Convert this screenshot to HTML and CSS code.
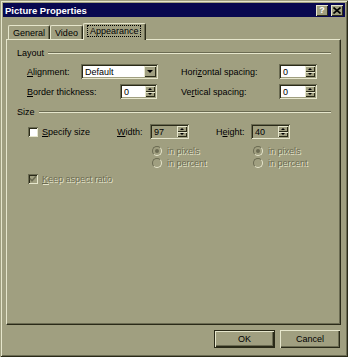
FILE: index.html
```html
<!DOCTYPE html>
<html lang="en">
<head>
    <meta charset="UTF-8">
    <title>Picture Properties</title>
    <link rel="stylesheet" href="styles.css">
</head>
<body>
    <div class="window">
        <div class="titlebar">
            <span class="title">Picture Properties</span>
            <div class="caption-btns">
                <button class="cap cap-help">?</button>
                <button class="cap cap-close">
                    <svg width="8" height="7" viewBox="0 0 8 7"><path d="M0.5 0.5 L7.5 6.5 M7.5 0.5 L0.5 6.5" stroke="#000" stroke-width="1.6"/></svg>
                </button>
            </div>
        </div>

        <div class="content">
            <div class="tabs">
                <div class="tab">General</div>
                <div class="tab">Video</div>
                <div class="tab active"><span class="focus">Appearance</span></div>
            </div>

            <div class="panel">
                <div class="group"><span>Layout</span><i class="etch"></i></div>

                <div class="row row-first">
                    <label class="lbl w-align"><u>A</u>lignment:</label>
                    <div class="field combo">
                        <span class="value">Default</span>
                        <span class="drop"></span>
                    </div>
                    <label class="lbl w-side"><span>Hori<u>z</u>ontal spacing:</span></label>
                    <div class="field spin">
                        <span class="value">0</span>
                        <span class="spin-btns"><i class="up"></i><i class="down"></i></span>
                    </div>
                </div>

                <div class="row">
                    <label class="lbl w-border"><u>B</u>order thickness:</label>
                    <div class="field spin spin-short">
                        <span class="value">0</span>
                        <span class="spin-btns"><i class="up"></i><i class="down"></i></span>
                    </div>
                    <label class="lbl w-side side-2">Ve<u>r</u>tical spacing:</label>
                    <div class="field spin">
                        <span class="value">0</span>
                        <span class="spin-btns"><i class="up"></i><i class="down"></i></span>
                    </div>
                </div>

                <div class="group group-size"><span>Size</span><i class="etch"></i></div>

                <div class="size-grid">
                    <div class="check-item">
                        <span class="checkbox"></span>
                        <span><u>S</u>pecify size</span>
                    </div>
                    <label class="lbl"><u>W</u>idth:</label>
                    <div class="field spin field-off spin-w">
                        <span class="value">97</span>
                        <span class="spin-btns"><i class="up"></i><i class="down"></i></span>
                    </div>
                    <label class="lbl">H<u>e</u>ight:</label>
                    <div class="field spin field-off spin-w">
                        <span class="value">40</span>
                        <span class="spin-btns"><i class="up"></i><i class="down"></i></span>
                    </div>

                    <div class="radio-item off col-w r2"><span class="radio on"></span>in pixels</div>
                    <div class="radio-item off col-h r2"><span class="radio on"></span>in pixels</div>
                    <div class="radio-item off col-w r3"><span class="radio"></span>in percent</div>
                    <div class="radio-item off col-h r3"><span class="radio"></span>in percent</div>

                    <div class="check-item off r4">
                        <span class="checkbox checked">
                            <svg width="8" height="8" viewBox="0 0 8 8"><path d="M1 3.5 L3 5.8 L7 1.2" fill="none" stroke="#6b6b52" stroke-width="1.6"/></svg>
                        </span>
                        <span><u>K</u>eep aspect ratio</span>
                    </div>
                </div>
            </div>

            <div class="footer">
                <button class="btn btn-default">OK</button>
                <button class="btn">Cancel</button>
            </div>
        </div>
    </div>
</body>
</html>
```

FILE: styles.css
```css
:root {
    --face: #a09f80;
    --light: #e6e6cc;
    --shadow: #6b6b52;
    --dark: #2a2a18;
    --title: #08084f;
}

body {
    margin: 0;
    font-family: "Liberation Sans", Arial, sans-serif;
    font-size: 9px;
    color: #000;
    background: var(--face);
}

button {
    font-family: inherit;
    font-size: inherit;
    color: inherit;
    padding: 0;
    border: none;
}

u {
    text-decoration: underline;
    text-underline-offset: 1px;
}

.window {
    width: 348px;
    height: 357px;
    box-sizing: border-box;
    padding: 3px;
    background: var(--face);
    display: flex;
    flex-direction: column;
    box-shadow: inset 1px 1px 0 var(--face), inset -1px -1px 0 var(--dark),
                inset 2px 2px 0 var(--light), inset -2px -2px 0 var(--shadow);
}

/* title bar */
.titlebar {
    height: 14px;
    background: var(--title);
    display: flex;
    align-items: center;
    padding: 0 2px;
    color: #fff;
}

.title {
    font-weight: bold;
    font-size: 9.5px;
}

.caption-btns {
    margin-left: auto;
    display: flex;
    gap: 3px;
}

.cap {
    width: 12px;
    height: 11px;
    background: var(--face);
    display: flex;
    align-items: center;
    justify-content: center;
    font-weight: bold;
    font-size: 9px;
    line-height: 1;
    box-shadow: inset 1px 1px 0 var(--light), inset -1px -1px 0 var(--dark);
}

/* tabs */
.content {
    flex: 1;
    display: flex;
    flex-direction: column;
    padding: 6px 4px 6px 3px;
}

.tabs {
    display: flex;
    height: 17px;
    padding-left: 2px;
    margin-bottom: -1px;
    position: relative;
    z-index: 1;
}

.tab {
    height: 14px;
    margin-top: 2px;
    padding: 0 4px;
    box-sizing: border-box;
    display: flex;
    align-items: center;
    background: var(--face);
    border-top: 1px solid var(--light);
    border-left: 1px solid var(--light);
    border-right: 1px solid var(--dark);
    border-radius: 2px 2px 0 0;
    box-shadow: inset -1px 0 0 var(--shadow);
}

.tab.active {
    height: 17px;
    margin-top: 0;
    margin-left: 0;
    padding: 0 5px 2px 4px;
}

.focus {
    outline: 1px dotted #000;
    outline-offset: 0;
    padding: 0 2px;
}

/* panel */
.panel {
    height: 286px;
    box-sizing: border-box;
    padding: 8px 9px 0 10px;
    border-top: 1px solid var(--light);
    border-left: 1px solid var(--light);
    border-right: 1px solid var(--dark);
    border-bottom: 1px solid var(--dark);
    box-shadow: inset -1px -1px 0 var(--shadow);
}

.group {
    display: flex;
    align-items: center;
    height: 10px;
}

.etch {
    flex: 1;
    margin-left: 4px;
    border-top: 1px solid var(--shadow);
    border-bottom: 1px solid var(--light);
}

.group-size {
    margin-top: 8px;
}

.row {
    display: flex;
    align-items: center;
    height: 15px;
    padding-left: 10px;
    margin-top: 5px;
}

.row-first {
    margin-top: 6px;
}

.lbl {
    white-space: nowrap;
}

.w-align { width: 54px; }
.w-border { width: 93px; }
.w-side { width: 98px; margin-left: 23px; }
.side-2 { margin-left: 24px; }

/* fields */
.field {
    height: 15px;
    box-sizing: border-box;
    background: #fff;
    display: flex;
    align-items: center;
    padding: 2px;
    box-shadow: inset 1px 1px 0 var(--shadow), inset -1px -1px 0 var(--light),
                inset 2px 2px 0 var(--dark), inset -2px -2px 0 var(--face);
}

.field-off {
    background: var(--face);
}

.value {
    flex: 1;
    padding-left: 2px;
}

.combo { width: 77px; }
.spin { width: 38px; }
.spin-short { width: 37px; }
.spin-w { width: 39px; }

.drop {
    width: 12px;
    height: 11px;
    background: var(--face);
    display: flex;
    align-items: center;
    justify-content: center;
    box-shadow: inset 1px 1px 0 var(--light), inset -1px -1px 0 var(--dark);
}

.drop::after {
    content: "";
    border-left: 3px solid transparent;
    border-right: 3px solid transparent;
    border-top: 3px solid #000;
}

.spin-btns {
    width: 10px;
    height: 11px;
    display: flex;
    flex-direction: column;
}

.spin-btns i {
    flex: 1;
    background: var(--face);
    display: flex;
    align-items: center;
    justify-content: center;
    box-shadow: inset 1px 1px 0 var(--light), inset -1px -1px 0 var(--dark);
}

.spin-btns .up::after {
    content: "";
    border-left: 2px solid transparent;
    border-right: 2px solid transparent;
    border-bottom: 2px solid #000;
}

.spin-btns .down::after {
    content: "";
    border-left: 2px solid transparent;
    border-right: 2px solid transparent;
    border-top: 2px solid #000;
}

/* size section */
.size-grid {
    display: grid;
    grid-template-columns: 89px 33px 66px 35px 38px;
    grid-template-rows: 15px 17px 14px 18px;
    align-items: center;
    margin: 7px 0 0 11px;
}

.check-item {
    display: flex;
    align-items: center;
    gap: 4px;
    white-space: nowrap;
}

.checkbox {
    width: 10px;
    height: 10px;
    box-sizing: border-box;
    background: #fff;
    display: flex;
    align-items: center;
    justify-content: center;
    box-shadow: inset 1px 1px 0 var(--shadow), inset -1px -1px 0 var(--light),
                inset 2px 2px 0 var(--dark);
}

.checkbox.checked {
    background: var(--face);
}

.off {
    color: var(--shadow);
    text-shadow: 1px 1px 0 var(--light);
}

.off u {
    text-decoration-color: var(--shadow);
}

.radio-item {
    display: flex;
    align-items: center;
    gap: 5px;
    white-space: nowrap;
    padding-left: 2px;
}

.radio {
    width: 10px;
    height: 10px;
    box-sizing: border-box;
    border-radius: 50%;
    background: var(--face);
    border: 1px solid;
    border-color: var(--shadow) var(--light) var(--light) var(--shadow);
    display: flex;
    align-items: center;
    justify-content: center;
}

.radio.on::after {
    content: "";
    width: 4px;
    height: 4px;
    border-radius: 50%;
    background: var(--shadow);
}

.col-w { grid-column: 3 / 4; }
.col-h { grid-column: 5 / 7; }
.r2 { grid-row: 2; align-self: end; }
.r3 { grid-row: 3; }
.r4 { grid-row: 4; grid-column: 1 / 3; }

/* footer buttons */
.footer {
    display: flex;
    justify-content: flex-end;
    gap: 5px;
    margin-top: 5px;
    padding-right: 1px;
}

.btn {
    width: 60px;
    height: 18px;
    background: var(--face);
    box-shadow: inset 1px 1px 0 var(--light), inset -1px -1px 0 var(--dark),
                inset -2px -2px 0 var(--shadow);
}

.btn-default {
    width: 61px;
    box-shadow: inset 0 0 0 1px var(--dark), inset 2px 2px 0 var(--light),
                inset -2px -2px 0 var(--dark), inset -3px -3px 0 var(--shadow);
}
```
